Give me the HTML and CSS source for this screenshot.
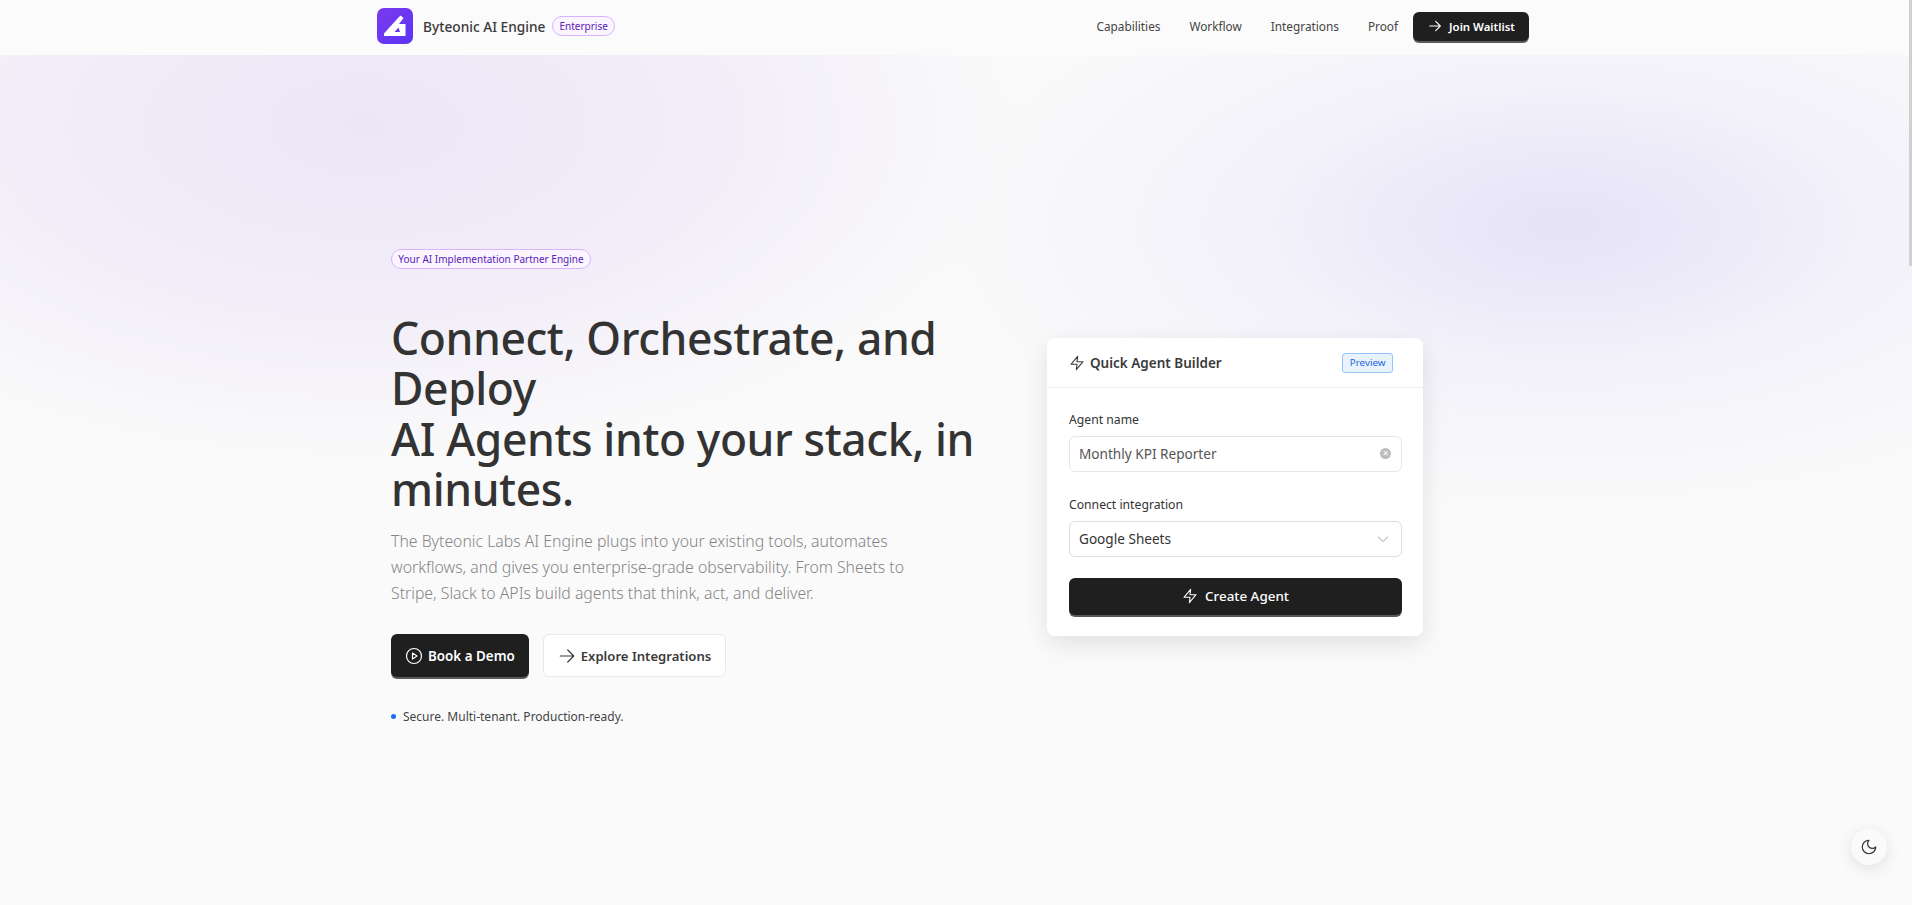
FILE: index.html
```html
<!DOCTYPE html>
<html lang="en">
<head>
    <meta charset="UTF-8">
    <meta name="viewport" content="width=device-width, initial-scale=1.0">
    <title>Byteonic AI Engine</title>
    <link rel="stylesheet" href="styles.css">
</head>
<body>
    <header class="navbar">
        <div class="nav-inner">
            <a class="brand" href="#">
                <span class="brand-logo">
                    <svg viewBox="0 0 36 36" width="36" height="36">
                        <path d="M7 28 L7 25.5 L21 10 L23.5 7.5 L26.5 10 L22 16 L28.5 16 L28.5 28 Z M17.5 24 L23 24 L21.5 19.5 Z" fill="#fff" fill-rule="evenodd"/>
                    </svg>
                </span>
                <span class="brand-name">Byteonic AI Engine</span>
                <span class="pill pill-nav">Enterprise</span>
            </a>
            <nav class="nav-links">
                <a href="#">Capabilities</a>
                <a href="#">Workflow</a>
                <a href="#">Integrations</a>
                <a href="#">Proof</a>
                <a class="btn btn-dark btn-nav" href="#">
                    <svg class="icon" viewBox="0 0 24 24" width="16" height="16"><path d="M4 12h16M13 5l7 7-7 7"/></svg>
                    Join Waitlist
                </a>
            </nav>
        </div>
    </header>

    <main class="hero">
        <div class="hero-grid">
            <section class="hero-copy">
                <span class="pill pill-hero">Your AI Implementation Partner Engine</span>
                <h1>Connect, Orchestrate, and Deploy<br>AI Agents into your stack, in minutes.</h1>
                <p class="lead">The Byteonic Labs AI Engine plugs into your existing tools, automates<br>workflows, and gives you enterprise-grade observability. From Sheets to<br>Stripe, Slack to APIs build agents that think, act, and deliver.</p>
                <div class="hero-actions">
                    <a class="btn btn-dark btn-lg" href="#">
                        <svg class="icon" viewBox="0 0 24 24" width="18" height="18"><circle cx="12" cy="12" r="10"/><path d="M10 8l6 4-6 4z"/></svg>
                        Book a Demo
                    </a>
                    <a class="btn btn-light btn-lg" href="#">
                        <svg class="icon" viewBox="0 0 24 24" width="18" height="18"><path d="M3 12h18M13 4l8 8-8 8"/></svg>
                        Explore Integrations
                    </a>
                </div>
                <p class="note"><span class="dot"></span>Secure. Multi-tenant. Production-ready.</p>
            </section>

            <aside class="card">
                <div class="card-header">
                    <h2>
                        <svg class="icon" viewBox="0 0 24 24" width="16" height="16"><path d="M13 2L3 14h9l-1 8 10-12h-9z"/></svg>
                        Quick Agent Builder
                    </h2>
                    <span class="tag">Preview</span>
                </div>
                <div class="card-body">
                    <div class="form-group">
                        <label>Agent name</label>
                        <div class="field field-muted">
                            Monthly KPI Reporter
                            <span class="clear">&times;</span>
                        </div>
                    </div>
                    <div class="form-group">
                        <label>Connect integration</label>
                        <div class="field">
                            Google Sheets
                            <svg class="icon chevron" viewBox="0 0 24 24" width="16" height="16"><path d="M5 9l7 7 7-7"/></svg>
                        </div>
                    </div>
                    <a class="btn btn-dark btn-block" href="#">
                        <svg class="icon" viewBox="0 0 24 24" width="16" height="16"><path d="M13 2L3 14h9l-1 8 10-12h-9z"/></svg>
                        Create Agent
                    </a>
                </div>
            </aside>
        </div>
    </main>

    <div class="scroll-thumb"></div>

    <button class="theme-toggle" type="button">
        <svg class="icon" viewBox="0 0 24 24" width="18" height="18"><path d="M12 3a6 6 0 0 0 9 9 9 9 0 1 1-9-9z"/></svg>
    </button>
</body>
</html>
```

FILE: styles.css
```css
* {
    margin: 0;
    padding: 0;
    box-sizing: border-box;
}

body {
    font-family: "Noto Sans", "Open Sans", sans-serif;
    background: #fafafa;
    color: #333;
}

a {
    color: inherit;
    text-decoration: none;
}

.icon {
    fill: none;
    stroke: currentColor;
    stroke-width: 1.6;
    stroke-linecap: round;
    stroke-linejoin: round;
    flex-shrink: 0;
}

.navbar {
    height: 55px;
    background: #fbfbfb;
}

.nav-inner {
    width: 1152px;
    margin-left: 377px;
    height: 100%;
    display: flex;
    align-items: center;
    justify-content: space-between;
    padding-bottom: 3px;
}

.brand {
    display: flex;
    align-items: center;
    gap: 10px;
}

.brand-logo {
    width: 36px;
    height: 36px;
    border-radius: 7px;
    background: linear-gradient(135deg, #7c3aed 0%, #5b34f5 100%);
    display: block;
}

.brand-logo svg {
    display: block;
}

.brand-name {
    font-size: 13.7px;
    font-weight: 500;
    color: #3a3a3a;
}

.pill {
    display: block;
    border: 1px solid #d8b4fe;
    border-radius: 999px;
    background: #faf5ff;
    color: #5b21b6;
    font-size: 10px;
    line-height: 18px;
}

.pill-nav {
    padding: 0 6px;
    margin-left: -3px;
}

.nav-links {
    display: flex;
    align-items: center;
    font-size: 11.8px;
    color: #444;
}

.nav-links > a {
    margin-left: 29px;
}

.btn {
    display: inline-flex;
    align-items: center;
    justify-content: center;
    border-radius: 6px;
    font-weight: 600;
}

.btn-dark {
    background: #1f1f1f;
    color: #fff;
    box-shadow: 0 2px 0 #5a5a5a;
}

.btn-light {
    background: #fff;
    color: #3a3a3a;
    border: 1px solid #e8e8e8;
    font-size: 13.1px;
}

.nav-links .btn-nav {
    margin-left: 15px;
    height: 29px;
    width: 116px;
    gap: 6px;
    font-size: 11.4px;
    color: #fff;
}

.btn-lg {
    height: 43px;
    padding: 0 14px;
    gap: 5px;
    font-size: 13.4px;
}

.btn-lg.btn-light {
    font-size: 13.1px;
}

.btn-block {
    width: 100%;
    height: 37px;
    gap: 7px;
    font-size: 13.4px;
    font-weight: 500;
}

.hero {
    background:
        radial-gradient(ellipse 660px 340px at 366px 70px, #ede6f8 0%, rgba(237, 230, 248, 0.65) 50%, rgba(237, 230, 248, 0) 100%),
        radial-gradient(ellipse 300px 140px at 1565px 170px, rgba(228, 224, 247, 0.8) 0%, rgba(228, 224, 247, 0) 100%),
        radial-gradient(ellipse 640px 290px at 1565px 170px, #efedfa 0%, rgba(239, 237, 250, 0.6) 50%, rgba(239, 237, 250, 0) 100%);
    height: 850px;
    padding: 194px 0 0 391px;
}

.hero-grid {
    display: grid;
    grid-template-columns: 600px 376px;
    gap: 56px;
    align-items: center;
}

.pill-hero {
    width: 200px;
    text-align: center;
}

.hero-copy h1 {
    font-size: 44.4px;
    line-height: 50.4px;
    font-weight: 500;
    letter-spacing: -0.4px;
    color: #333;
    margin-top: 44px;
}

.lead {
    margin-top: 13px;
    font-size: 15.8px;
    line-height: 26px;
    font-weight: 300;
    color: #858585;
}

.hero-actions {
    display: flex;
    gap: 14px;
    margin-top: 28px;
}

.hero-actions .btn {
    padding-top: 2px;
}

.note {
    display: flex;
    align-items: center;
    font-size: 12px;
    line-height: 18px;
    color: #444;
    margin-top: 31px;
    margin-bottom: -1px;
}

.dot {
    width: 5px;
    height: 5px;
    border-radius: 50%;
    background: #1d6ff2;
    margin-right: 7px;
}

.card {
    background: #fff;
    border-radius: 8px;
    box-shadow: 0 8px 24px rgba(0, 0, 0, 0.1);
    height: 298px;
}

.card-header {
    height: 50px;
    display: flex;
    align-items: center;
    justify-content: space-between;
    padding: 2px 30px 0 22px;
    border-bottom: 1px solid #ececec;
}

.card-header h2 {
    display: flex;
    align-items: center;
    gap: 5px;
    font-size: 13.5px;
    font-weight: 600;
    color: #3a3a3a;
}

.tag {
    border: 1px solid #90c5fb;
    border-radius: 3px;
    background: #e8f3ff;
    color: #1d63d8;
    font-size: 9.8px;
    line-height: 18px;
    padding: 0 6.5px;
}

.card-body {
    padding: 22px 21px 0 22px;
}

.form-group {
    margin-bottom: 23px;
}

.form-group + .form-group {
    margin-bottom: 21px;
}

.form-group label {
    display: block;
    font-size: 12.2px;
    color: #333;
    line-height: 20px;
    margin-bottom: 6px;
}

.field {
    height: 36px;
    border: 1px solid #ddd;
    border-radius: 6px;
    display: flex;
    align-items: center;
    justify-content: space-between;
    padding: 0 10px 0 9px;
    font-size: 13.6px;
    color: #333;
    background: #fff;
}

.field-muted {
    border-color: #e6e6e6;
    color: #555;
}

.clear {
    width: 11px;
    height: 11px;
    border-radius: 50%;
    background: #bcbcbc;
    color: #fff;
    font-size: 10px;
    line-height: 11px;
    text-align: center;
}

.chevron {
    color: #c4c4c4;
}

.scroll-thumb {
    position: fixed;
    top: 0;
    right: 0;
    width: 3px;
    height: 266px;
    background: #d0d0d0;
}

.theme-toggle {
    position: fixed;
    left: 1851px;
    top: 829px;
    width: 36px;
    height: 36px;
    border: none;
    border-radius: 50%;
    background: #fafafa;
    color: #333;
    box-shadow: 0 4px 16px rgba(0, 0, 0, 0.1);
    display: flex;
    align-items: center;
    justify-content: center;
}
```
